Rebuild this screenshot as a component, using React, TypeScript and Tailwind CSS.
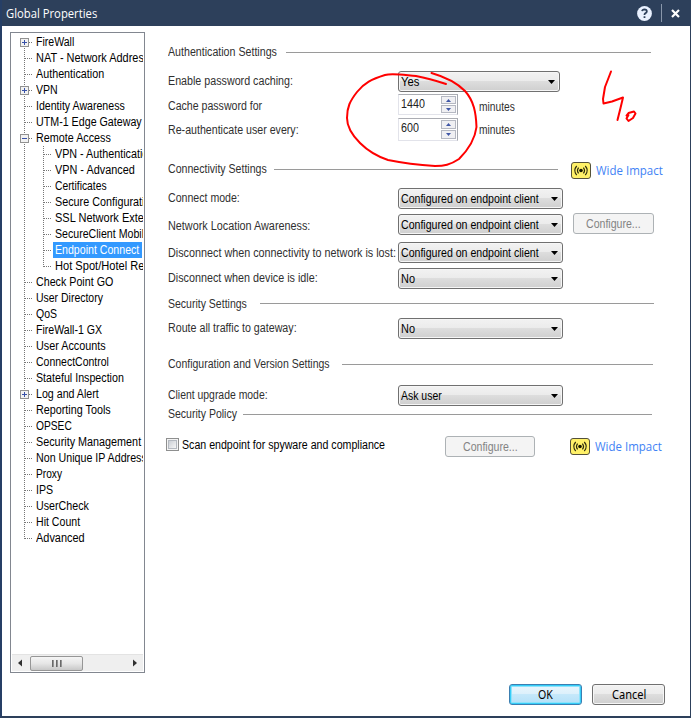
import { useLayoutEffect, useRef, useState } from "react";
import type { ReactNode } from "react";

/** One line of text, condensed or stretched to fill `w` pixels. */
function Line({ w, children, className = "" }: { w: number; children: string; className?: string }) {
  const ref = useRef<HTMLSpanElement>(null);
  const [ratio, setRatio] = useState(1);
  useLayoutEffect(() => {
    if (ref.current) setRatio(w / ref.current.offsetWidth);
  }, [w, children]);
  return (
    <span className={"block h-5 shrink-0 leading-5 whitespace-nowrap " + className} style={{ width: w }}>
      <span ref={ref} className="inline-block origin-left" style={{ transform: `scaleX(${ratio})` }}>
        {children}
      </span>
    </span>
  );
}

type Node = { label: string; w: number; child?: boolean; box?: "+" | "-"; selected?: boolean };

const nodes: Node[] = [
  { label: "FireWall", w: 38, box: "+" },
  { label: "NAT - Network Address", w: 113 },
  { label: "Authentication", w: 68 },
  { label: "VPN", w: 22, box: "+" },
  { label: "Identity Awareness", w: 89 },
  { label: "UTM-1 Edge Gateway", w: 106 },
  { label: "Remote Access", w: 75, box: "-" },
  { label: "VPN - Authentication", w: 99, child: true },
  { label: "VPN - Advanced", w: 80, child: true },
  { label: "Certificates", w: 52, child: true },
  { label: "Secure Configuration", w: 101, child: true },
  { label: "SSL Network Extender", w: 111, child: true },
  { label: "SecureClient Mobile", w: 95, child: true },
  { label: "Endpoint Connect", w: 84, child: true, selected: true },
  { label: "Hot Spot/Hotel Registration", w: 134, child: true },
  { label: "Check Point GO", w: 77 },
  { label: "User Directory", w: 67 },
  { label: "QoS", w: 21 },
  { label: "FireWall-1 GX", w: 66 },
  { label: "User Accounts", w: 70 },
  { label: "ConnectControl", w: 73 },
  { label: "Stateful Inspection", w: 88 },
  { label: "Log and Alert", w: 63, box: "+" },
  { label: "Reporting Tools", w: 75 },
  { label: "OPSEC", w: 36 },
  { label: "Security Management A", w: 115 },
  { label: "Non Unique IP Address", w: 111 },
  { label: "Proxy", w: 26 },
  { label: "IPS", w: 17 },
  { label: "UserCheck", w: 53 },
  { label: "Hit Count", w: 44 },
  { label: "Advanced", w: 49 },
];

function TreeRow({ node, first, last, lastChild }: { node: Node; first: boolean; last: boolean; lastChild: boolean }) {
  const start = first ? 8 : 0;
  return (
    <div className="flex h-4 w-[131px] shrink-0 items-center overflow-hidden">
      <svg className="h-4 w-6 shrink-0" viewBox="0 0 24 16" shapeRendering="crispEdges">
        <path d={`M12.5 ${start}V${last ? 9 : 16}`} stroke="#777" strokeDasharray="1 1" />
        {!node.child && <path d="M13 8.5H21" stroke="#777" strokeDasharray="1 1" />}
        {node.box && (
          <>
            <rect x="8.5" y="4.5" width="8" height="8" fill="#f2f2f2" stroke="#919191" />
            <path d="M10 8.5H15" stroke="#3851a8" />
            {node.box === "+" && <path d="M12.5 6V11" stroke="#3851a8" />}
          </>
        )}
      </svg>
      {node.child && (
        <svg className="h-4 w-[17px] shrink-0" viewBox="0 0 17 16" shapeRendering="crispEdges">
          <path d={`M7.5 0V${lastChild ? 9 : 16}M8 8.5H16`} fill="none" stroke="#777" strokeDasharray="1 1" />
        </svg>
      )}
      <div className={"flex h-4 items-center " + (node.selected ? "w-[89px] bg-[#3399ff] pl-0.5 text-white" : node.child ? "pl-0.5" : "")}>
        <Line w={node.w}>{node.label}</Line>
      </div>
    </div>
  );
}

function Tree() {
  return (
    <aside className="flex h-[641px] w-[135px] shrink-0 flex-col border border-[#828790] p-px text-black">
      <div className="flex min-h-0 flex-1 flex-col">
        {nodes.map((n, i) => (
          <TreeRow
            key={n.label}
            node={n}
            first={i === 0}
            last={i === nodes.length - 1}
            lastChild={!!n.child && !nodes[i + 1]?.child}
          />
        ))}
      </div>
      <div className="flex h-[17px] items-center border-t border-[#e3e3e3] bg-[#efefef]">
        <svg className="h-4 w-[18px]" viewBox="0 0 18 16"><path d="M10 4.500V11.500L6 8Z" fill="#303030" /></svg>
        <div className="flex h-[15px] w-[53px] items-center justify-center gap-px rounded-[2px] border border-[#969696] bg-linear-to-b from-[#f5f5f5] via-[#e6e6e6] to-[#c8c8c8]">
          <i className="mr-px h-[7px] w-0.5 bg-linear-to-r from-[#555] to-[#aaa]" />
          <i className="mr-px h-[7px] w-0.5 bg-linear-to-r from-[#555] to-[#aaa]" />
          <i className="h-[7px] w-0.5 bg-linear-to-r from-[#555] to-[#aaa]" />
        </div>
        <svg className="ml-auto h-4 w-[14px]" viewBox="0 0 14 16"><path d="M4 4.500V11.500L8 8Z" fill="#303030" /></svg>
      </div>
    </aside>
  );
}

function Select({ text, w, className = "w-[165px]" }: { text: string; w: number; className?: string }) {
  return (
    <div className={"flex h-[21px] shrink-0 items-center justify-between rounded-[3px] border border-[#707070] bg-[linear-gradient(#f2f2f2,#ebebeb_48%,#dddddd_50%,#cfcfcf)] pr-1 pl-[2px] text-black shadow-[inset_0_0_0_1px_#f6f6f6] " + className}>
      <Line w={w}>{text}</Line>
      <svg className="h-1 w-[7px]" viewBox="0 0 7 4"><path d="M0 0H7L3.500 4Z" fill="#000" /></svg>
    </div>
  );
}

function Spinner({ value, w, tall }: { value: string; w: number; tall?: boolean }) {
  const arrow = (d: string) => (
    <div className={"flex w-[15px] items-center justify-center border border-[#b5b8c2] bg-[#f0f0f3] " + (tall ? "h-[9px]" : "h-2")}>
      <svg className="h-[3px] w-[5px]" viewBox="0 0 5 3"><path d={d} fill="#3f56a6" /></svg>
    </div>
  );
  return (
    <div className={"flex w-[60px] shrink-0 justify-between border border-[#e2e3ea] border-t-[#abadb3] border-r-[#a5a8b0] bg-white pr-px pl-0.5 text-[#222] " + (tall ? "h-[23px]" : "h-[21px]")}>
      <Line w={w} className="-mt-px">{value}</Line>
      <div className="flex flex-col justify-center gap-px">
        {arrow("M0 3H5L2.500 0Z")}
        {arrow("M0 0H5L2.500 3Z")}
      </div>
    </div>
  );
}

function Disabled({ className }: { className: string }) {
  return (
    <div className={"flex h-[21px] shrink-0 items-center justify-center rounded-[3px] border border-[#adb2b5] bg-[#f4f4f4] text-[#838383] " + className}>
      <Line w={55}>Configure...</Line>
    </div>
  );
}

function WideImpact({ className }: { className: string }) {
  return (
    <div className={"flex items-start " + className}>
      <svg className="h-[17px] w-5" viewBox="0 0 20 17" fill="none">
        <rect x=".5" y=".5" width="19" height="16" rx="2.5" fill="#fff168" stroke="#54513a" />
        <circle cx="10" cy="8.5" r="1.8" fill="#171700" />
        <path d="M7.6 5.6Q5.4 8.5 7.6 11.4M12.4 5.6Q14.6 8.5 12.4 11.4M5.7 4Q1.9 8.5 5.7 13M14.3 4Q18.1 8.5 14.3 13" stroke="#29280c" strokeWidth="1.2" />
      </svg>
      <Line w={67} className="-mt-px ml-[5px] font-['Open_Sans','Noto_Sans',sans-serif] text-[12.5px] text-[#3f82f5]">Wide Impact</Line>
    </div>
  );
}

function Row({ label, w, className, lm = "", children }: { label: string; w: number; className: string; lm?: string; children: ReactNode }) {
  return (
    <div className={"flex shrink-0 items-start " + className}>
      <div className={"w-[230px] shrink-0 " + lm}><Line w={w}>{label}</Line></div>
      {children}
    </div>
  );
}

function Heading({ label, w, className, rule, children }: { label: string; w: number; className: string; rule: string; children?: ReactNode }) {
  return (
    <div className={"flex shrink-0 items-start " + className}>
      <Line w={w}>{label}</Line>
      <div className={"h-px shrink-0 bg-[#9a9a9a] " + rule} />
      {children}
    </div>
  );
}

function Form() {
  return (
    <main className="flex w-[510px] flex-col text-[#303030]">
      <Heading label="Authentication Settings" w={109} className="mt-4 h-[29px]" rule="mt-2.5 ml-[9px] w-[365px]" />
      <Row label="Enable password caching:" w={125} className="h-[23px]">
        <Select text="Yes" w={18} className="w-[162px]" />
      </Row>
      <Row label="Cache password for" w={94} className="h-6" lm="mt-0.5">
        <Spinner value="1440" w={24} />
        <Line w={36} className="mt-[3px] ml-[21px]">minutes</Line>
      </Row>
      <Row label="Re-authenticate user every:" w={131} className="h-[41px]" lm="mt-0.5">
        <Spinner value="600" w={18} tall />
        <Line w={36} className="mt-0.5 ml-[21px]">minutes</Line>
      </Row>
      <Heading label="Connectivity Settings" w={99} className="h-[29px]" rule="mt-2.5 ml-[7px] w-[284px]">
        <WideImpact className="mt-[3px] ml-[13px]" />
      </Heading>
      <Row label="Connect mode:" w={72} className="h-[25px]">
        <Select text="Configured on endpoint client" w={138} />
      </Row>
      <Row label="Network Location Awareness:" w={142} className="h-[29px]" lm="mt-[3px]">
        <Select text="Configured on endpoint client" w={138} className="mt-px w-[165px]" />
        <Disabled className="ml-2.5 w-[81px]" />
      </Row>
      <Row label="Disconnect when connectivity to network is lost:" w={228} className="h-[26px]" lm="mt-px">
        <Select text="Configured on endpoint client" w={138} />
      </Row>
      <Row label="Disconnect when device is idle:" w={150} className="h-[26px]">
        <Select text="No" w={14} />
      </Row>
      <Heading label="Security Settings" w={79} className="h-6" rule="mt-[9px] ml-[13px] w-[394px]" />
      <Row label="Route all traffic to gateway:" w={129} className="h-9">
        <Select text="No" w={14} />
      </Row>
      <Heading label="Configuration and Version Settings" w={162} className="h-[31px]" rule="mt-2.5 ml-3 w-[311px]" />
      <Row label="Client upgrade mode:" w={100} className="h-[19px]">
        <Select text="Ask user" w={41} />
      </Row>
      <Heading label="Security Policy" w={69} className="h-8" rule="mt-2.5 ml-1.5 w-[409px]" />
      <div className="-ml-0.5 flex h-6 items-start">
        <div className="mt-0.5 h-[13px] w-[13px] shrink-0 border border-[#8e8f8f] bg-[#f4f4f4] p-px">
          <div className="h-full w-full border border-[#b4b9c0] bg-linear-to-br from-[#cbcfd5] to-[#f6f6f6]" />
        </div>
        <Line w={203} className="-mt-px ml-[3px] text-black">Scan endpoint for spyware and compliance</Line>
        <Disabled className="ml-[60px] w-[90px]" />
        <WideImpact className="mt-0.5 ml-[35px]" />
      </div>
    </main>
  );
}

export default function App() {
  return (
    <div className="relative flex h-[718px] w-[691px] flex-col overflow-hidden border-r border-b-2 border-l-2 border-[#2d405b] border-l-[#263f66] bg-white font-['Liberation_Sans',Arial,sans-serif] text-[12.5px]">
      <header className="flex h-[26px] shrink-0 items-center bg-[#2d405b] pl-1 text-white">
        <Line w={91} className="mt-px font-['Open_Sans','Noto_Sans',sans-serif] text-[12.5px]">Global Properties</Line>
        <svg className="ml-auto h-[15px] w-[15px]" viewBox="0 0 15 15" fill="none">
          <circle cx="7.5" cy="7.5" r="7.4" fill="#e9f1ff" />
          <path d="M5.1 5.2Q5.4 3.4 7.5 3.4Q9.9 3.5 9.8 5.5Q9.6 6.7 8.3 7.3Q7.5 7.8 7.5 9M7.5 10.3V12" stroke="#2d405b" strokeWidth="1.8" />
        </svg>
        <div className="ml-[9px] h-[18px] w-px bg-[#8997aa]" />
        <svg className="mr-[10px] ml-[9px] h-[9px] w-[9px]" viewBox="0 0 9 9"><path d="M1 1L8 8M8 1L1 8" stroke="#fff" strokeWidth="2.2" /></svg>
      </header>
      <div className="flex h-[658px] shrink-0">
        <div className="mt-1.5 mr-[23px] ml-2 shrink-0"><Tree /></div>
        <Form />
      </div>
      <footer className="flex justify-end gap-2.5 pr-[25px] text-black">
        <div className="flex h-[21px] w-[73px] items-center justify-center rounded-[3px] border border-[#3c7fb1] bg-[linear-gradient(#eaf6fd,#dcf0fb_48%,#c5e8fa_50%,#b4e0f8)] shadow-[inset_0_0_0_1px_#35cdf8,inset_0_0_0_2px_#8fe3fb]">
          <Line w={15} className="font-['Noto_Sans',sans-serif] text-[12px]">OK</Line>
        </div>
        <div className="flex h-[21px] w-[73px] items-center justify-center rounded-[3px] border border-[#707070] bg-[linear-gradient(#f2f2f2,#ebebeb_48%,#dddddd_50%,#cfcfcf)] shadow-[inset_0_0_0_1px_#f6f6f6]">
          <Line w={34} className="font-['Noto_Sans',sans-serif] text-[12px]">Cancel</Line>
        </div>
      </footer>
      {/* Pen annotations drawn over the dialog */}
      <svg className="pointer-events-none absolute top-0 -left-0.5 h-[718px] w-[691px]" viewBox="0 0 691 718" fill="none" stroke="#ff0000" strokeWidth="2" strokeLinecap="round" strokeLinejoin="round">
        <path d="M431.5 73C442 76 456 82 465 91C474 101 476 113 476.500 127C475 139 469 149 459 159C450 165 444 166 435 166C420 165 403 163 388 160C376 156 368 151 360 143C350 133 347 126 347 118C347 107 350 101 357 92C364 83 372 79 385 75C392 73 404 75 416 76C427 78 437 81 446 84" />
        <path d="M611 71.500L608.500 78L605 87L603 99L603.500 103.500L612 101.500L623 97.500L620.500 108L617.500 120" />
        <path d="M626.500 115.500L628.500 113L634 111.500L635.500 113.500L633 118L628.500 121L626.500 118.500L628.500 115" />
      </svg>
    </div>
  );
}
